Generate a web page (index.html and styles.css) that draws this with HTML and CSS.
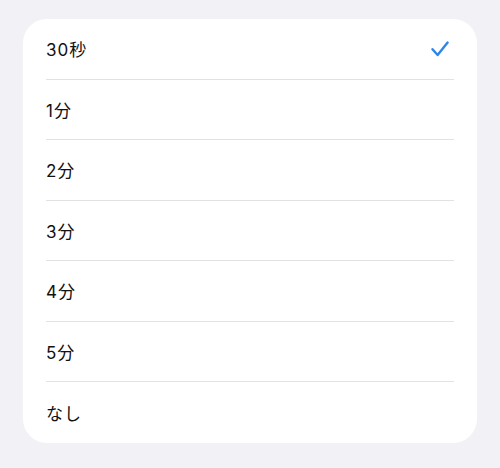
FILE: index.html
```html
<!DOCTYPE html>
<html>
<head>
    <meta name="viewport" content="width=device-width, initial-scale=1.0">
    <title>自動ロック</title>
    <link rel="stylesheet" href="styles.css">
</head>
<body>
    <div class="list">
        <div class="row">
            <span class="label">30秒</span>
            <svg class="check" width="18" height="16" viewBox="0 0 18 16">
                <path d="M1.5 8.2 L6.6 14 L16.6 1.6" fill="none" stroke="#2f86e4" stroke-width="2.4" stroke-linecap="round" stroke-linejoin="round"/>
            </svg>
        </div>
        <div class="row"><span class="label">1分</span></div>
        <div class="row"><span class="label">2分</span></div>
        <div class="row"><span class="label">3分</span></div>
        <div class="row"><span class="label">4分</span></div>
        <div class="row"><span class="label">5分</span></div>
        <div class="row"><span class="label">なし</span></div>
    </div>
</body>
</html>
```
FILE: styles.css
```css
* {
    margin: 0;
    padding: 0;
    box-sizing: border-box;
}
body {
    background-color: #f2f1f6;
    font-family: Inter, "Noto Sans CJK JP", sans-serif;
    height: 468px;
    padding-top: 19px;
}
.list {
    background-color: #fff;
    border-radius: 24px;
    margin: 0 23px;
    padding: 0 23px;
}
.row {
    display: flex;
    align-items: center;
    justify-content: space-between;
    height: 60.5px;
    border-bottom: 1px solid #e2e2e5;
}
.row:last-child {
    border-bottom: none;
}
.label {
    font-size: 17px;
    color: #111;
    letter-spacing: 1px;
}
.check {
    margin-right: 5px;
}
```
